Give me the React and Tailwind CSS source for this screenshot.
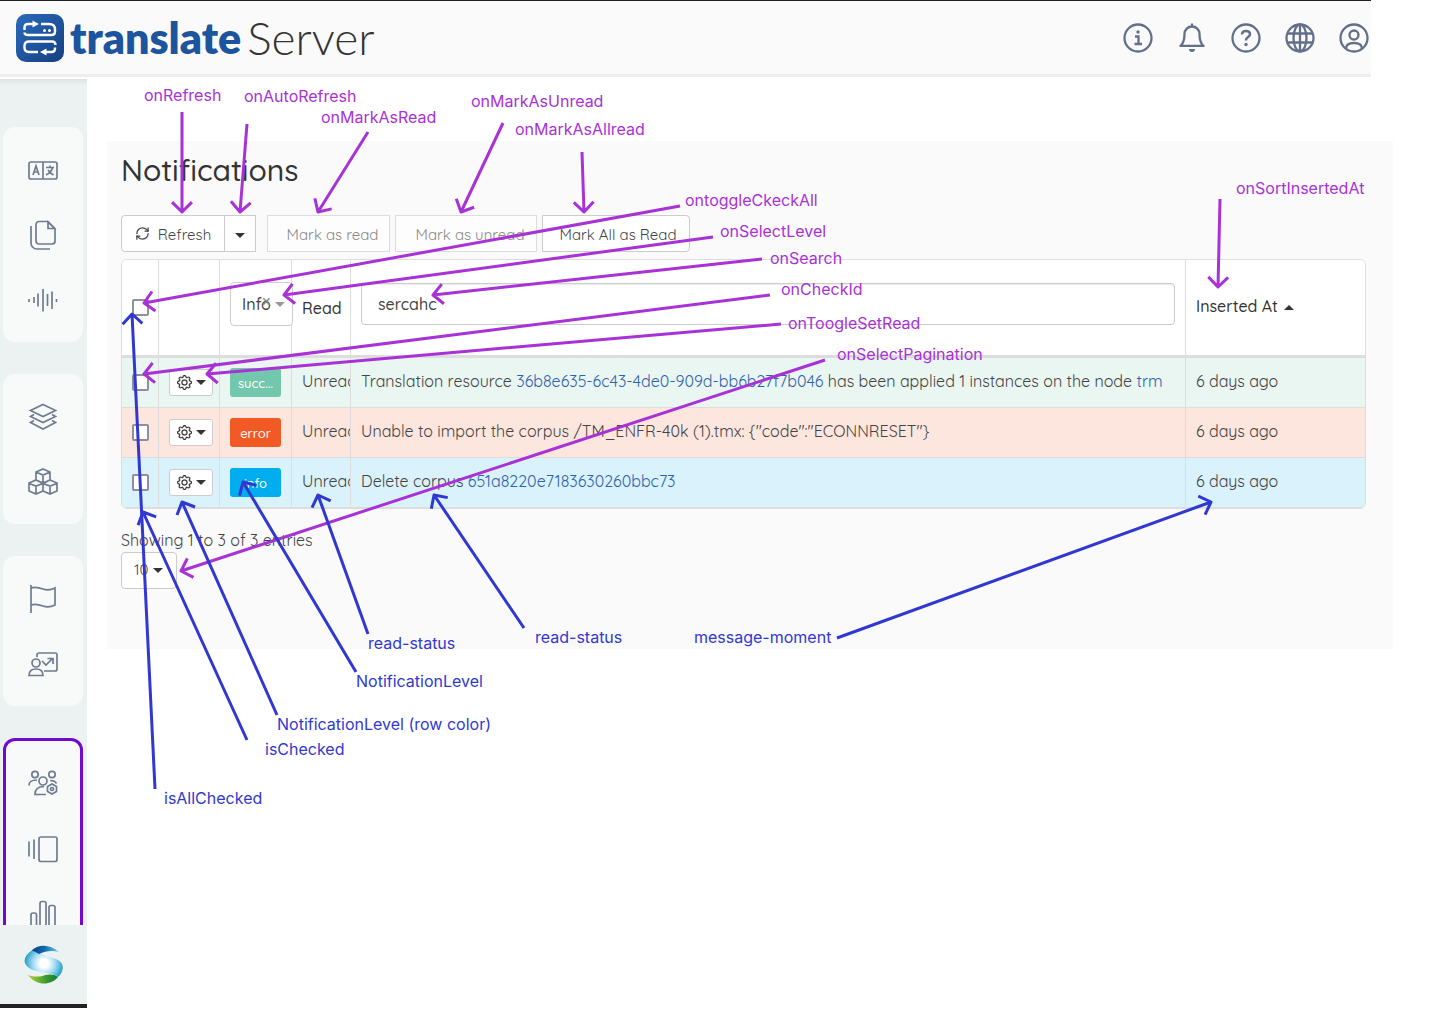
import React from "react";
import { RefreshCw } from "lucide-react";
import { BsGear } from "react-icons/bs";

const PURPLE = "#a832d6";
const BLUE = "#3138d2";

const callouts = [
  { text: "onRefresh", x: 144, y: 95, color: PURPLE, from: [182, 112], to: [182, 212] },
  { text: "onAutoRefresh", x: 244, y: 96, color: PURPLE, from: [247, 124], to: [240, 212] },
  { text: "onMarkAsRead", x: 321, y: 117, color: PURPLE, from: [368, 132], to: [318, 212] },
  { text: "onMarkAsUnread", x: 471, y: 101, color: PURPLE, from: [503, 123], to: [461, 212] },
  { text: "onMarkAsAllread", x: 515, y: 129, color: PURPLE, from: [582, 152], to: [584, 212] },
  { text: "ontoggleCkeckAll", x: 685, y: 200, color: PURPLE, from: [680, 206], to: [144, 303] },
  { text: "onSelectLevel", x: 720, y: 231, color: PURPLE, from: [713, 237], to: [284, 295] },
  { text: "onSearch", x: 770, y: 258, color: PURPLE, from: [762, 259], to: [433, 295] },
  { text: "onCheckId", x: 781, y: 289, color: PURPLE, from: [770, 295], to: [144, 374] },
  { text: "onToogleSetRead", x: 788, y: 323, color: PURPLE, from: [781, 324], to: [207, 374] },
  { text: "onSelectPagination", x: 837, y: 354, color: PURPLE, from: [825, 360], to: [181, 571] },
  { text: "onSortInsertedAt", x: 1236, y: 188, color: PURPLE, from: [1220, 199], to: [1218, 287] },
  { text: "isAllChecked", x: 164, y: 798, color: BLUE, from: [155, 789], to: [132, 314] },
  { text: "isChecked", x: 265, y: 749, color: BLUE, from: [247, 740], to: [143, 512] },
  { text: "NotificationLevel (row color)", x: 277, y: 724, color: BLUE, from: [277, 715], to: [182, 502] },
  { text: "NotificationLevel", x: 356, y: 681, color: BLUE, from: [356, 672], to: [243, 482] },
  { text: "read-status", x: 368, y: 643, color: BLUE, from: [368, 634], to: [318, 495] },
  { text: "read-status", x: 535, y: 637, color: BLUE, from: [524, 628], to: [434, 495] },
  { text: "message-moment", x: 694, y: 637, color: BLUE, from: [837, 638], to: [1211, 502] },
];

function arrowPath([x1, y1], [x2, y2]) {
  const back = Math.atan2(y1 - y2, x1 - x2);
  const wing = (turn) =>
    `${x2 + 14 * Math.cos(back + turn)} ${y2 + 14 * Math.sin(back + turn)}`;
  return `M${x1} ${y1}L${x2} ${y2}M${wing(Math.PI / 4)}L${x2} ${y2}L${wing(-Math.PI / 4)}`;
}

function Callouts() {
  return (
    <div className="pointer-events-none absolute inset-0">
      <svg className="absolute inset-0 h-full w-full" fill="none" strokeWidth="3" aria-hidden="true">
        {callouts.map((c) => (
          <path key={c.text + c.x} d={arrowPath(c.from, c.to)} stroke={c.color} strokeLinejoin="round" />
        ))}
      </svg>
      {callouts.map((c) => (
        <span
          key={c.text + c.x}
          className="absolute -translate-y-1/2 font-[Inter,sans-serif] text-base leading-5 whitespace-nowrap"
          style={{ left: c.x, top: c.y, color: c.color }}
        >
          {c.text}
        </span>
      ))}
    </div>
  );
}

function LogoMark() {
  return (
    <svg className="size-12" viewBox="0 0 48 48" fill="none" aria-hidden="true">
      <defs>
        <linearGradient id="mark" x1="0" y1="0" x2="1" y2="1">
          <stop offset="0" stopColor="#2a6bbd" />
          <stop offset="1" stopColor="#163f80" />
        </linearGradient>
      </defs>
      <rect width="48" height="48" rx="10" fill="url(#mark)" />
      <g stroke="#fff" strokeWidth="2.400">
        <path d="M8.500 16v-2.500q0-3.500 3.500-3.500H18" />
        <path d="M25 10h8q6 0 6 5.500v2q0 3.500-3.500 3.500H12q-3.500 0-3.500-2.500" />
        <path d="M39.500 31q0-3.500-3.500-3.500H13q-4.500 0-4.500 4.500v1.500q0 4.500 4.500 4.500h9" />
        <path d="M39 33.500v1q0 3.500-3.500 3.500H29" />
      </g>
      <path d="M16.500 6.500 23 10l-6.500 3.500zM30.500 34.500 24 38l6.500 3.500z" fill="#fff" />
      <circle cx="28.500" cy="16.500" r="1.500" fill="#fff" />
      <circle cx="33.500" cy="16.500" r="1.500" fill="#fff" />
    </svg>
  );
}

function TopIcon({ label, children }) {
  return (
    <button type="button" aria-label={label} className="text-[#64708a]">
      <svg className="size-[30px]" viewBox="0 0 30 30" fill="none" stroke="currentColor" strokeWidth="2.300">
        {children}
      </svg>
    </button>
  );
}

function Header() {
  return (
    <header className="mr-[69px] flex h-[77px] items-center justify-between border-t border-b-[3px] border-t-[#231f20] border-b-[#eeeeee] bg-[#fafafa] pr-0.5 pl-4">
      <a href="#home" className="flex items-center font-[Lato,sans-serif]">
        <LogoMark />
        <span className="ml-1.5 text-[43px] leading-none font-extrabold text-[#1c549e]">translate</span>
        <span className="ml-1.5 text-[46px] leading-none font-light text-[#333333]">Server</span>
      </a>
      <div className="flex items-center gap-6">
        <TopIcon label="Information">
          <circle cx="15" cy="15" r="13.500" />
          <path d="M12 13.500h3.500v7M11.500 21h7.500" />
          <circle cx="15" cy="9" r="1.700" fill="currentColor" stroke="none" />
        </TopIcon>
        <TopIcon label="Notifications">
          <path d="M15 0.500v3.500M4 22.500c2.500-2.500 3.500-5 3.500-11.500 0-4.500 3.500-7.500 7.500-7.500s7.500 3 7.500 7.500c0 6.500 1 9 3.500 11.500M2.500 22.800h25" />
          <path d="M12 26h6a3 3 0 0 1-6 0z" fill="currentColor" stroke="none" />
        </TopIcon>
        <TopIcon label="Help">
          <circle cx="15" cy="15" r="13.500" />
          <path strokeWidth="2.500" d="M11 11.500c0-2.500 1.700-3.500 4-3.500s4 1 4 3.300c0 2.700-4 2.700-4 5.700v.5" />
          <circle cx="15" cy="21.500" r="1.700" fill="currentColor" stroke="none" />
        </TopIcon>
        <TopIcon label="Language">
          <circle cx="15" cy="15" r="13.500" />
          <ellipse cx="15" cy="15" rx="6.500" ry="13.500" />
          <path d="M15 1.500v27M2.500 10.500h25M2.500 19.500h25" />
        </TopIcon>
        <TopIcon label="Account">
          <circle cx="15" cy="15" r="13.500" />
          <circle cx="15" cy="12" r="4.500" />
          <path d="M7 25.500c0-4 3.500-5.500 8-5.500s8 1.500 8 5.500" />
        </TopIcon>
      </div>
    </header>
  );
}

const sideGroups = [
  [
    {
      label: "Translate",
      art: (
        <>
          <rect x="1" y="7" width="28" height="17" rx="2" />
          <path d="M15 7v17M5 20l3-9 3 9M6 17h4M18 12.500h8M22 10.500v2M24.500 13c-1 3-3.500 5.500-6.500 7M20 15c1.500 2 3.500 4 5.500 5" />
        </>
      ),
    },
    {
      label: "Documents",
      art: (
        <>
          <path d="M11 1.500h9l7 7V21a3 3 0 0 1-3 3H11a3 3 0 0 1-3-3V4.500a3 3 0 0 1 3-3zM20 2v6.500h6.500z" />
          <path d="M3 6v17a6 6 0 0 0 6 6h13" />
        </>
      ),
    },
    {
      label: "Speech",
      art: <path d="M1 14v3M6 12v6M10 8.500v13M15 4v22.500M19.500 9v12M24 6.500v17.500M28.500 14v3" />,
    },
  ],
  [
    {
      label: "Layers",
      art: (
        <>
          <path d="M15 2.500 27.500 8.500 15 14.500 2.500 8.500z" />
          <path d="M6 12.500 2.500 14.500 15 20.500l12.500-6-3.500-2M6 18.500l-3.500 2L15 27l12.500-6.500-3.500-2" />
        </>
      ),
    },
    {
      label: "Models",
      art: (
        <path d="M15 2l7 3v8l-7 3-7-3V5zM8 5l7 3 7-3M15 8v8M8 13l7 3.500V24l-7 3-7-3v-8zM1 16.500 8 19l7-2.500M8 19v8M22 13l7 3v8l-7 3-7-3v-7.500zM15 16.500l7 2.500 7-2.500M22 19v8" />
      ),
    },
  ],
  [
    {
      label: "Flags",
      art: <path d="M3 1v28M3 4c4-1.500 8-.5 12 1s8 1 12-1v17c-4 2-8 2.500-12 1s-8-2.500-12-1" />,
    },
    {
      label: "Training",
      art: (
        <>
          <path d="M9 8V6a2 2 0 0 1 2-2h16a2 2 0 0 1 2 2v14a2 2 0 0 1-2 2H16" />
          <circle cx="8" cy="14" r="4" />
          <path d="M1 26.500c0-4 2.500-6.500 7-6.500s7 2.500 7 6.500zM14 12l4 4 6-6M19.500 9.500H25V15" />
        </>
      ),
    },
  ],
  [
    {
      label: "Users",
      art: (
        <>
          <circle cx="7" cy="5.500" r="3.200" />
          <circle cx="24" cy="5.500" r="3.200" />
          <circle cx="15" cy="12" r="4" />
          <path d="M1 16.500c0-4 2-5.500 8-5.500M22 11.500c4 0 5.500 1 6.500 3M18 25.500H7c0-6 3-8 9-8" />
          <path d="M24 15l4.500 2.500v5L24 25l-4.500-2.500v-5z" />
          <circle cx="24" cy="20" r="1.500" />
        </>
      ),
    },
    {
      label: "Panels",
      art: (
        <>
          <rect x="11" y="3" width="18" height="24.500" rx="2" />
          <path d="M1 7.500v15M6 5.500v19.500" />
        </>
      ),
    },
    {
      label: "Statistics",
      art: (
        <>
          <rect x="3" y="14" width="5.500" height="13.500" rx="2" />
          <rect x="12" y="2.500" width="6" height="25" rx="2" />
          <rect x="21" y="6.500" width="6" height="21" rx="2" />
        </>
      ),
    },
  ],
];

function Sidebar() {
  return (
    <aside className="mt-0.5 flex h-[calc(100vh-95px)] w-[87px] shrink-0 flex-col border-b-4 border-[#222222] bg-[#ecf2f2] bg-linear-to-b from-[#dde2e3] to-[#ecf2f2] to-[6px]">
      <nav className="flex flex-1 flex-col gap-8 overflow-hidden pt-12 pr-1 pl-[3px]">
        {sideGroups.map((group, i) => (
          <div
            key={i}
            className={
              i === 3
                ? "shrink-0 rounded-xl border-[3px] border-[#7209d0] bg-[#f8faf9] py-2.5"
                : "shrink-0 rounded-xl bg-[#f8faf9] py-2.5"
            }
          >
            {group.map((item) => (
              <a
                key={item.label}
                href={`#${item.label}`}
                aria-label={item.label}
                className="flex h-[65px] items-center justify-center text-[#707b90]"
              >
                <svg className="size-[30px]" viewBox="0 0 30 30" fill="none" stroke="currentColor" strokeWidth="1.700">
                  {item.art}
                </svg>
              </a>
            ))}
          </div>
        ))}
      </nav>
      <div className="flex h-[79px] items-center justify-center">
        <svg className="size-10" viewBox="0 0 40 40" aria-hidden="true">
          <defs>
            <radialGradient id="glow" cx="20" cy="18.500" r="20" gradientUnits="userSpaceOnUse">
              <stop offset="0.200" stopColor="#ffffff" />
              <stop offset="0.550" stopColor="#a5dcf5" />
              <stop offset="1" stopColor="#1c9bc0" />
            </radialGradient>
            <linearGradient id="cap" x1="0" x2="1">
              <stop offset="0" stopColor="#0a3f86" />
              <stop offset="0.500" stopColor="#0e6db0" />
              <stop offset="1" stopColor="#7dd3ee" />
            </linearGradient>
            <linearGradient id="leaf" x1="0" x2="1">
              <stop offset="0" stopColor="#b4d335" />
              <stop offset="0.600" stopColor="#3f9a2e" />
              <stop offset="1" stopColor="#0b7f3c" />
            </linearGradient>
          </defs>
          <path d="M7 6C1 10-1 16 2 20c4 6 13 6 20 8 5 1 9 1 12 4 4-3 6-9 4-13-3-6-12-6-19-9L13 6z" fill="url(#glow)" />
          <path d="M35 7C26-1 14-1 7 6c3-1 5 2 8 3 6-3 13-4 20-2z" fill="url(#cap)" />
          <path d="M4 30c6 2 13 2 17 0 5-1 10-1 13 2-7 9-22 9-30-2z" fill="url(#leaf)" />
        </svg>
      </div>
    </aside>
  );
}

function Caret({ className = "" }) {
  return (
    <svg className={`h-[5px] w-2.5 ${className}`} viewBox="0 0 10 5" fill="currentColor" aria-hidden="true">
      <path d="M0 0h10L5 5z" />
    </svg>
  );
}

const cell = "border-r border-b border-[#dddddd] last:border-r-0";
const check = "block size-[17px] appearance-none rounded-[2px] border-2 border-[#8f8f9d] bg-white";

const rows = [
  {
    tone: "bg-[#eaf6f1]",
    badge: "bg-[#73c7ad]",
    level: "succ...",
    message: (
      <>
        Translation resource{" "}
        <a href="#resource" className="text-[#2e62ad]">36b8e635-6c43-4de0-909d-bb6b27f7b046</a> has been
        applied 1 instances on the node <a href="#node" className="text-[#2e62ad]">trm</a>
      </>
    ),
  },
  {
    tone: "bg-[#fde6de]",
    badge: "bg-[#f15a24]",
    level: "error",
    message: <>Unable to import the corpus /TM_ENFR-40k (1).tmx: {'{"code":"ECONNRESET"}'}</>,
  },
  {
    tone: "bg-[#d9f2fc]",
    badge: "bg-[#00aeef]",
    level: "info",
    message: (
      <>
        Delete corpus <a href="#corpus" className="text-[#2e62ad]">651a8220e7183630260bbc73</a>
      </>
    ),
  },
];

function NotificationTable() {
  return (
    <table className="mt-[7px] w-full table-fixed border-separate border-spacing-0 overflow-hidden rounded-md border border-[#dddddd] text-left text-base leading-5 text-[#444444]">
      <colgroup>
        <col className="w-[37px]" />
        <col className="w-[61px]" />
        <col className="w-[72px]" />
        <col className="w-[59px]" />
        <col />
        <col className="w-[179px]" />
      </colgroup>
      <thead>
        <tr className="h-[98px] bg-white text-[#333333] [&>th]:border-b-[3px] [&>th]:font-medium">
          <th className={`${cell} pl-2.5`}>
            <input type="checkbox" aria-label="Select all" className={check} />
          </th>
          <th className={cell} aria-label="Actions" />
          <th className={`${cell} pb-2 pl-2.5`}>
            <div className="relative w-[63px]">
              <select aria-label="Level" className="h-11 w-full appearance-none rounded-[4px] border border-[#cccccc] bg-white pl-[11px] text-base font-medium text-[#444444]">
                <option>Info</option>
              </select>
              <span className="pointer-events-none absolute top-2.5 left-8 text-lg leading-5 text-[#888888]">×</span>
              <Caret className="pointer-events-none absolute top-5 right-2 text-[#999999]" />
            </div>
          </th>
          <th className={`${cell} pl-2.5`}>Read</th>
          <th className={`${cell} px-2.5 pb-2`}>
            <input
              type="text"
              aria-label="Search"
              defaultValue="sercahc"
              className="block h-[42px] w-full rounded-[4px] border border-[#cccccc] bg-white px-4 text-base text-[#444444] shadow-[inset_0_1px_1px_rgba(0,0,0,0.075)]"
            />
          </th>
          <th className={`${cell} pb-1 pl-2.5`}>
            <button type="button" className="flex items-center gap-1.5">
              Inserted At <Caret className="mt-1 rotate-180" />
            </button>
          </th>
        </tr>
      </thead>
      <tbody>
        {rows.map((row) => (
          <tr key={row.level} className={`h-[50px] ${row.tone}`}>
            <td className={`${cell} pl-2.5`}>
              <input type="checkbox" aria-label={`Select ${row.level}`} className={check} />
            </td>
            <td className={`${cell} pl-2.5`}>
              <button type="button" aria-label="Row actions" className="flex h-[27px] w-11 items-center justify-center gap-1 rounded-[3px] border border-[#cccccc] bg-white text-[#333333]">
                <BsGear className="size-[15px]" strokeWidth="0.300" />
                <Caret />
              </button>
            </td>
            <td className={`${cell} pl-2.5`}>
              <span className={`flex h-[29px] w-[51px] items-center justify-center rounded-[3px] text-[13px] font-medium text-white ${row.badge}`}>
                {row.level}
              </span>
            </td>
            <td className={`${cell} overflow-hidden pb-1 pl-2.5`}>Unread</td>
            <td className={`${cell} px-2.5 pb-1 whitespace-nowrap`}>{row.message}</td>
            <td className={`${cell} pb-1 pl-2.5`}>6 days ago</td>
          </tr>
        ))}
      </tbody>
    </table>
  );
}

const toolButton = "flex h-[37px] items-center justify-center border pt-1 text-[15px]";

export default function App() {
  return (
    <div className="relative min-h-screen overflow-hidden bg-white font-[Quicksand,Lato,sans-serif]">
      <Header />
      <div className="flex">
        <Sidebar />
        <main className="min-w-0 flex-1 pt-16 pr-[47px] pl-5">
          <section className="bg-[#fafafa] pt-[11px] pr-[27px] pb-[60px] pl-3.5">
            <h1 className="text-[30px] leading-9 font-medium text-[#333333]">Notifications</h1>
            <div className="mt-[27px] flex">
              <button type="button" className={`${toolButton} w-[104px] gap-2 rounded-l-[4px] border-[#cccccc] bg-white text-[#444444]`}>
                <RefreshCw className="mb-1 size-[15px]" /> Refresh
              </button>
              <button type="button" aria-label="Auto refresh" className={`${toolButton} -ml-px w-8 border-[#cccccc] bg-white text-[#333333]`}>
                <Caret />
              </button>
              <button type="button" disabled className={`${toolButton} ml-[11px] w-[123px] border-[#dddddd] bg-[#fdfdfd] pl-2 text-[#888888]`}>
                Mark as read
              </button>
              <button type="button" disabled className={`${toolButton} ml-[5px] w-[142px] border-[#dddddd] bg-[#fdfdfd] pl-2 text-[#888888]`}>
                Mark as unread
              </button>
              <button type="button" className={`${toolButton} ml-[5px] w-[148px] rounded-r-[4px] border-[#cccccc] bg-white pl-1 text-[#444444]`}>
                Mark All as Read
              </button>
            </div>
            <NotificationTable />
            <p className="mt-[19px] text-base leading-6 text-[#444444]">Showing 1 to 3 of 3 entries</p>
            <div className="relative w-14">
              <select aria-label="Entries per page" className="h-[37px] w-full appearance-none rounded-[4px] border border-[#cccccc] bg-white pl-3 text-[15px] text-[#444444]">
                <option>10</option>
              </select>
              <Caret className="pointer-events-none absolute top-4 right-3.5 text-[#333333]" />
            </div>
          </section>
        </main>
      </div>
      <Callouts />
    </div>
  );
}
